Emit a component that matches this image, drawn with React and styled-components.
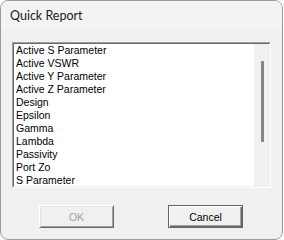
import React from "react";
import styled, { createGlobalStyle } from "styled-components";

const Global = createGlobalStyle`
  html, body { margin: 0; padding: 0; background: #ffffff; }
  * { box-sizing: border-box; }
`;

const Window = styled.div`
  width: 283px;
  height: 240px;
  border: 1px solid #9b9b9b;
  border-radius: 8px;
  overflow: hidden;
  background: #f0f0f0;
  display: flex;
  flex-direction: column;
`;

const TitleBar = styled.div`
  height: 29px;
  flex: none;
  background: #f3f3f3;
  display: flex;
  align-items: center;
  padding-left: 9px;
  font-family: "Lato", "Noto Sans", sans-serif;
  font-size: 12.5px;
  color: #1a1a1a;
`;

const Content = styled.div`
  padding: 12px 0 0 11px;
  display: flex;
  flex-direction: column;
`;

const ListOuter = styled.div`
  width: 259px;
  height: 146px;
  border-style: solid;
  border-width: 1px;
  border-color: #a0a0a0 #ffffff #ffffff #a0a0a0;
`;

const ListInner = styled.div`
  width: 100%;
  height: 100%;
  border-style: solid;
  border-width: 1px;
  border-color: #696969 #f0f0f0 #f0f0f0 #696969;
  background: #ffffff;
  display: flex;
`;

const Items = styled.ul`
  list-style: none;
  margin: 0;
  padding: 0 0 0 2px;
  flex: 1;
  overflow: hidden;
`;

const Item = styled.li`
  height: 13px;
  line-height: 13px;
  font-family: "Liberation Sans", Arial, sans-serif;
  font-size: 10.5px;
  color: #000000;
  white-space: nowrap;
`;

const ScrollTrack = styled.div`
  width: 15px;
  flex: none;
  background: #f0f0f0;
  position: relative;
`;

const Thumb = styled.div`
  position: absolute;
  left: 7px;
  top: 17px;
  width: 3px;
  height: 81px;
  background: #858585;
  border-radius: 1px;
`;

const ButtonRow = styled.div`
  display: flex;
  gap: 54px;
  padding-left: 27px;
  margin-top: 17px;
`;

const Button = styled.button`
  width: 75px;
  height: 23px;
  padding: 0;
  margin: 0;
  font-family: "Liberation Sans", Arial, sans-serif;
  font-size: 10.5px;
  background: #f0f0f0;
  color: ${(p) => (p.disabled ? "#a0a0a0" : "#000000")};
  border-style: solid;
  border-width: 1px;
  border-color: ${(p) =>
    p.$default ? "#646464" : "#ffffff #696969 #696969 #ffffff"};
  box-shadow: ${(p) =>
    p.$default
      ? "inset 1px 1px 0 #ffffff, inset -1px -1px 0 #696969, inset -2px -2px 0 #a0a0a0"
      : "inset 1px 1px 0 #e3e3e3, inset -1px -1px 0 #a0a0a0"};
  outline: none;
  cursor: default;
`;

const items = [
  "Active S Parameter",
  "Active VSWR",
  "Active Y Parameter",
  "Active Z Parameter",
  "Design",
  "Epsilon",
  "Gamma",
  "Lambda",
  "Passivity",
  "Port Zo",
  "S Parameter",
];

export default function App() {
  return (
    <>
      <Global />
      <Window>
        <TitleBar>Quick Report</TitleBar>
        <Content>
          <ListOuter>
            <ListInner>
              <Items>
                {items.map((t) => (
                  <Item key={t}>{t}</Item>
                ))}
              </Items>
              <ScrollTrack>
                <Thumb />
              </ScrollTrack>
            </ListInner>
          </ListOuter>
          <ButtonRow>
            <Button disabled>OK</Button>
            <Button $default>Cancel</Button>
          </ButtonRow>
        </Content>
      </Window>
    </>
  );
}
